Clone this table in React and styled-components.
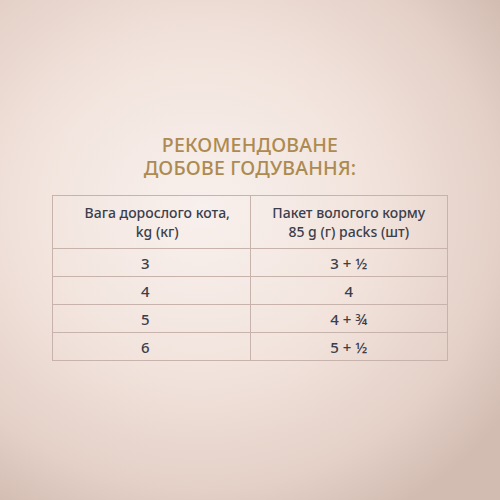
import React from "react";
import styled, { createGlobalStyle } from "styled-components";

const GlobalStyle = createGlobalStyle`
  html, body {
    margin: 0;
    padding: 0;
  }
  body {
    font-family: "Noto Sans", "Open Sans", sans-serif;
  }
`;

const rows = [
  ["3", "3 + ½"],
  ["4", "4"],
  ["5", "4 + ¾"],
  ["6", "5 + ½"],
];

export default function App() {
  return (
    <>
      <GlobalStyle />
      <Page>
        <Title>
          <TitleLine>РЕКОМЕНДОВАНЕ</TitleLine>
          <TitleLine>ДОБОВЕ ГОДУВАННЯ:</TitleLine>
        </Title>
        <Table>
          <thead>
            <tr>
              <HeadCell $offset={12}>
                Вага дорослого кота,
                <br />
                kg (кг)
              </HeadCell>
              <HeadCell>
                Пакет вологого корму
                <br />
                85 g (г) packs (шт)
              </HeadCell>
            </tr>
          </thead>
          <tbody>
            {rows.map(([weight, packs]) => (
              <tr key={weight}>
                <Cell $offset={-12}>{weight}</Cell>
                <Cell>{packs}</Cell>
              </tr>
            ))}
          </tbody>
        </Table>
      </Page>
    </>
  );
}

const Page = styled.div`
  width: 500px;
  height: 500px;
  box-sizing: border-box;
  padding-top: 134px;
  display: flex;
  flex-direction: column;
  align-items: center;
  background: radial-gradient(
    ellipse 75% 70% at 40% 42%,
    #f8f0ed 0%,
    #f2e4dd 45%,
    #e4d0c7 80%,
    #d2bcb2 100%
  );
`;

const Title = styled.h1`
  margin: 0 0 15px;
  font-size: 19.5px;
  font-weight: 500;
  letter-spacing: 0.2px;
  color: #ad8a50;
  text-align: center;
`;

const TitleLine = styled.span`
  display: block;
  height: 23px;
  line-height: 22px;
`;

const Table = styled.table`
  width: 396px;
  border-collapse: collapse;
  border: 1.5px solid #c7b3ab;
  color: #3b3e4b;
  td,
  th {
    border: 1.5px solid #c7b3ab;
  }
`;

const HeadCell = styled.th`
  width: 50%;
  height: 52px;
  padding: 0 0 0 ${(p) => p.$offset || 0}px;
  font-size: 14px;
  line-height: 19px;
  font-weight: 500;
  text-align: center;
  vertical-align: middle;
`;

const Cell = styled.td`
  height: 27px;
  padding: 0 0 0 ${(p) => (p.$offset < 0 ? 0 : p.$offset || 0)}px;
  padding-right: ${(p) => (p.$offset < 0 ? -p.$offset : 0)}px;
  font-size: 15px;
  font-weight: 500;
  text-align: center;
`;
